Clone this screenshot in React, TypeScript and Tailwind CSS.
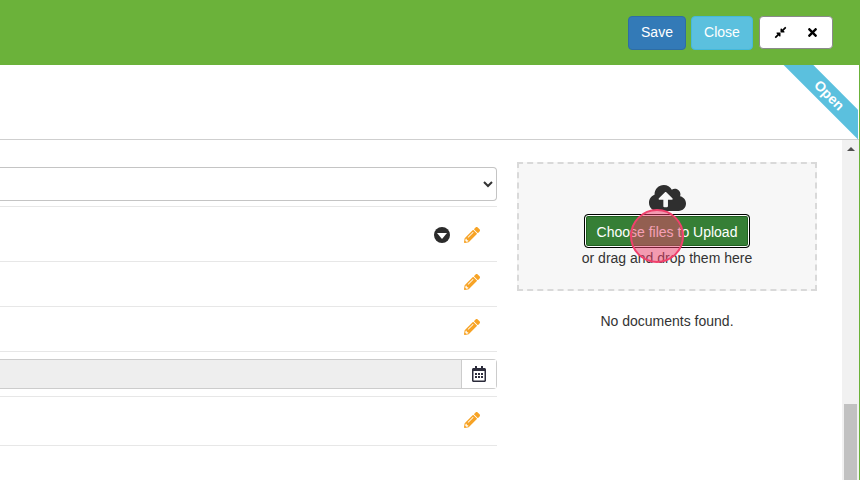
import React from 'react';
import { FaCloudUploadAlt, FaPencilAlt, FaRegCalendarAlt, FaCompressAlt, FaTimes } from 'react-icons/fa';

function EditRow({ height, caret }: { height: string; caret?: boolean }) {
    return (
        <div className={`flex items-center justify-end gap-[14px] border-b border-[#e7e7e7] pr-[17px] ${height}`}>
            {caret && (
                <span className="flex h-4 w-4 items-center justify-center rounded-full bg-[#2b2b2b]">
                    <span className="mt-[2px] h-0 w-0 border-x-[5px] border-t-[6px] border-x-transparent border-t-white"></span>
                </span>
            )}
            <FaPencilAlt className="h-[16px] w-[16px] text-[#f7a325]" />
        </div>
    );
}

export default function App() {
    return (
        <div className="relative flex h-[480px] w-[860px] flex-col overflow-hidden border-r border-[#6bb23a] bg-white font-['Liberation_Sans',sans-serif] text-[14px] text-[#333]">
            {/* Green toolbar */}
            <header className="flex h-[65px] shrink-0 items-center justify-end gap-[5px] bg-[#6bb23a] pr-[26px]">
                <button className="h-[34px] w-[58px] rounded border border-[#2e6da4] bg-[#337ab7] text-white">Save</button>
                <button className="h-[34px] w-[62px] rounded border border-[#46b8da] bg-[#5bc0de] text-white">Close</button>
                <div className="ml-[1px] flex h-[33px] w-[74px] items-center justify-center gap-[19px] rounded border border-[#8a8a8a] bg-white">
                    <FaCompressAlt className="h-[13px] w-[13px] text-black" />
                    <FaTimes className="h-[13px] w-[13px] text-black" />
                </div>
            </header>

            <div className="h-[75px] shrink-0 border-b border-[#cfcfcf]"></div>

            <div className="flex min-h-0 flex-1">
                {/* Form rows, cut off on the left */}
                <div className="w-[497px] shrink-0 pt-[27px]">
                    <div className="border-b border-[#e7e7e7] pb-[5px]">
                        <select className="block h-[34px] w-full rounded-r border border-l-0 border-[#c4c4c4] bg-white text-[#333]"></select>
                    </div>
                    <EditRow height="h-[55px] pt-[2px]" caret />
                    <EditRow height="h-[45px] pb-[4px]" />
                    <EditRow height="h-[45px] pb-[4px]" />
                    <div className="flex h-[45px] items-center border-b border-[#e7e7e7]">
                        <div className="flex h-[30px] w-full rounded-r border border-l-0 border-[#cccccc]">
                            <div className="flex-1 bg-[#eeeeee]"></div>
                            <div className="flex w-[35px] items-center justify-center border-l border-[#cccccc] bg-white pb-[1px]">
                                <FaRegCalendarAlt className="h-[16px] w-[14px] text-[#2b2b3a]" />
                            </div>
                        </div>
                    </div>
                    <EditRow height="h-[49px] pb-[2px]" />
                </div>

                {/* Upload column */}
                <div className="ml-[20px] w-[300px] shrink-0 pt-[22px]">
                    <div className="flex h-[129px] flex-col items-center border-2 border-dashed border-[#d9d9d9] bg-[#f7f7f7] pt-[19px]">
                        <FaCloudUploadAlt className="h-[30px] w-[37px] text-[#2f2f2f]" />
                        <button className="mt-[1px] h-[34px] w-[166px] rounded border border-black bg-[#367f36] pt-[2px] text-white shadow-[inset_0_0_0_1px_#ffffff,inset_0_0_0_2px_#1f5f1f]">Choose files to Upload</button>
                        <div className="leading-[20px]">or drag and drop them here</div>
                    </div>
                    <div className="mt-[20px] text-center leading-[20px]">No documents found.</div>
                </div>

                {/* Scrollbar */}
                <div className="ml-auto flex w-[17px] shrink-0 flex-col items-center bg-[#f1f1f1]">
                    <span className="mt-[7px] h-0 w-0 border-x-[4px] border-b-[4px] border-x-transparent border-b-[#505050]"></span>
                    <div className="mt-[253px] w-[13px] flex-1 bg-[#c1c1c1]"></div>
                </div>
            </div>

            {/* Status ribbon */}
            <div className="absolute right-[1px] top-[65px] h-[74px] w-[76px] overflow-hidden">
                <div className="absolute left-[-18px] top-[20px] flex h-[21px] w-[130px] rotate-45 items-center justify-center bg-[#5bc0de] text-[14px] font-bold text-white">Open</div>
            </div>

            {/* Click highlight */}
            <div className="absolute left-[630px] top-[209px] h-[54px] w-[54px] rounded-full border-[2px] border-[#f0406c] bg-[#f0406c]/50"></div>
        </div>
    );
}
